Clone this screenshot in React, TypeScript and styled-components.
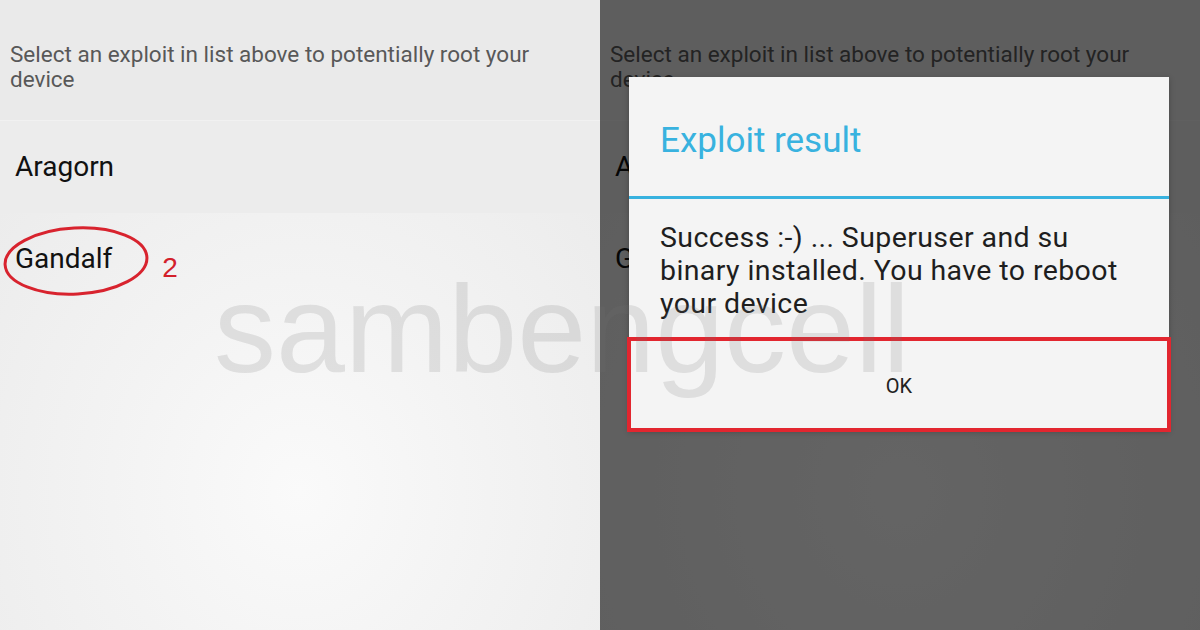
import React from "react";
import styled, { createGlobalStyle } from "styled-components";

const Global = createGlobalStyle`
  html, body { margin: 0; padding: 0; }
  body { width: 1200px; height: 630px; overflow: hidden; font-family: Roboto, "Noto Sans", sans-serif; }
`;

const Page = styled.div`
  position: relative;
  width: 1200px;
  height: 630px;
  display: flex;
  overflow: hidden;
`;

const Panel = styled.section`
  position: relative;
  width: 600px;
  height: 630px;
  display: flex;
  flex-direction: column;
  background: radial-gradient(ellipse 70% 75% at 50% 78%, #fafafa 0%, #f3f3f3 45%, #ebebeb 100%);
`;

const Hint = styled.div`
  height: 121px;
  box-sizing: border-box;
  padding: 42px 0 0 10px;
  font-size: 22.5px;
  line-height: 25px;
  color: #585858;
  background: #eaeaea;
  border-bottom: 1px solid #f1f1f1;
`;

const HintText = styled.div`
  max-width: 545px;
`;

const Row = styled.div<{ $shade?: string }>`
  position: relative;
  height: 92px;
  box-sizing: border-box;
  display: flex;
  align-items: center;
  padding-left: 15px;
  background: ${(p) => p.$shade || "transparent"};
`;

const Name = styled.span`
  font-size: 28px;
  line-height: 32px;
  color: #111;
`;

const Mark = styled.span`
  align-self: flex-end;
  margin-left: 50px;
  padding-bottom: 21px;
  font-size: 28px;
  line-height: 32px;
  color: #d3202b;
  font-family: "Liberation Sans", Arial, sans-serif;
`;

const Circle = styled.svg`
  position: absolute;
  left: 0;
  top: 12px;
  overflow: visible;
`;

const Scrim = styled.div`
  position: absolute;
  inset: 0;
  background: rgba(0, 0, 0, 0.6);
`;

const Dialog = styled.div`
  position: absolute;
  left: 29px;
  top: 77px;
  width: 540px;
  background: #f4f4f4;
  display: flex;
  flex-direction: column;
  box-shadow: 0 2px 6px rgba(0, 0, 0, 0.25);
`;

const Title = styled.div`
  height: 122px;
  box-sizing: border-box;
  padding: 44px 0 0 31px;
  font-size: 35px;
  line-height: 40px;
  color: #38b2df;
  border-bottom: 3px solid #38b2df;
`;

const Body = styled.div`
  box-sizing: border-box;
  height: 140px;
  padding: 22px 20px 0 31px;
  font-size: 28.5px;
  line-height: 33px;
  letter-spacing: 0.4px;
  color: #1e1e1e;
  white-space: nowrap;
`;

const OkButton = styled.button`
  height: 91px;
  border: none;
  margin: 0;
  background: #f4f4f4;
  outline: 4px solid #e2262f;
  outline-offset: -2px;
  font-family: Roboto, sans-serif;
  font-size: 20px;
  color: #222;
  display: flex;
  align-items: center;
  justify-content: center;
  padding: 2px 0 0 0;
`;

const Watermark = styled.div`
  position: absolute;
  left: 214px;
  top: 267px;
  font-family: "Liberation Sans", Arial, sans-serif;
  font-size: 124px;
  line-height: 124px;
  color: rgba(110, 110, 110, 0.17);
  pointer-events: none;
  white-space: nowrap;
`;

function ListContent({ annotate }: { annotate?: boolean }) {
  return (
    <>
      <Hint>
        <HintText>Select an exploit in list above to potentially root your device</HintText>
      </Hint>
      <Row $shade="#ececec">
        <Name>Aragorn</Name>
      </Row>
      <Row>
        {annotate && (
          <Circle width="152" height="72" viewBox="0 0 152 72">
            <ellipse cx="76" cy="36" rx="71" ry="33" fill="none" stroke="#d8232e" strokeWidth="3" transform="rotate(-3 76 36)" />
          </Circle>
        )}
        <Name>Gandalf</Name>
        {annotate && <Mark>2</Mark>}
      </Row>
    </>
  );
}

export default function App() {
  return (
    <Page>
      <Global />
      <Panel>
        <ListContent annotate />
      </Panel>
      <Panel>
        <ListContent />
        <Scrim />
        <Dialog>
          <Title>Exploit result</Title>
          <Body>
            Success :-) ... Superuser and su
            <br />
            binary installed. You have to reboot
            <br />
            your device
          </Body>
          <OkButton>OK</OkButton>
        </Dialog>
      </Panel>
      <Watermark>sambengcell</Watermark>
    </Page>
  );
}
